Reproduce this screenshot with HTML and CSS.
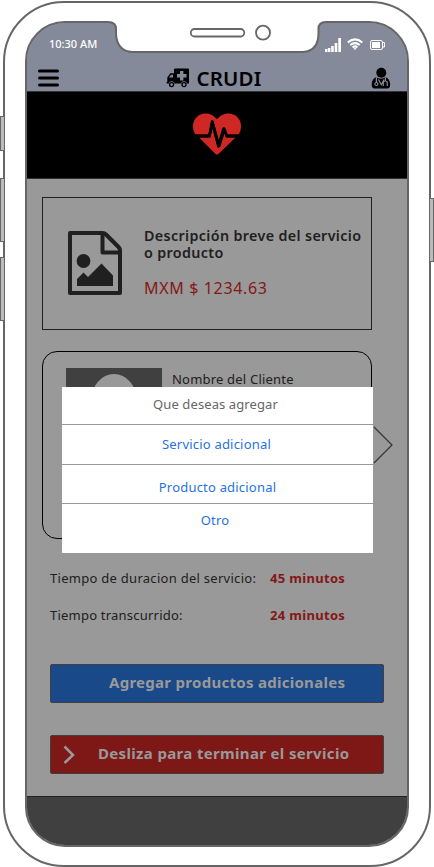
FILE: index.html
```
<!DOCTYPE html>
<html lang="es">
<head>
<meta charset="utf-8">
<title>CRUDI</title>
<link rel="stylesheet" href="styles.css">
</head>
<body>
<div class="phone">
  <i class="side mute"></i><i class="side vol-up"></i><i class="side vol-down"></i><i class="side power"></i>
  <div class="screen">
    <header class="top">
      <div class="status">
        <span class="clock">10:30 AM</span>
        <svg class="status-icons" width="62" height="16" viewBox="0 0 62 16" fill="#fff">
          <path d="M0 12h2.400v3H0zM2.900 11h2.500v4H2.900zM6.200 9h2.500v6H6.200zM9.700 6h2.600v9H9.700zM13.300 1H16v14h-2.700z"/>
          <g fill="none" stroke="#fff" stroke-width="2"><path d="M22.700 5.500Q30-.7 37.300 5.500M25.300 8.100Q30 4.200 34.700 8.100M27.600 10.400Q30 8.300 32.400 10.400"/></g>
          <path d="M28.500 11.500Q30 10.500 31.500 11.500L30 13z"/>
          <rect x="45.500" y="3.500" width="12" height="9" rx="1.500" fill="none" stroke="#fff"/><path d="M47 5h8v6h-8z"/><path d="M58 5.500h1.500v4.500H58" fill="none" stroke="#fff"/>
        </svg>
      </div>
      <div class="nav">
        <svg class="menu" width="21" height="18" viewBox="0 0 21 18"><path d="M1.500 2h18M1.500 9h18M1.500 16h18" stroke="#000" stroke-width="3" stroke-linecap="round"/></svg>
        <div class="brand">
          <svg width="24" height="20" viewBox="0 0 24 20">
            <path d="M8 1.500q0-1 1-1h13q1 0 1 1v14h-2.100a3 3 0 0 0-5.800 0H8.500a3 3 0 0 0-5.800 0H.600V14h.700V9.500l3-4.300H8z"/>
            <path d="M3 9.500 5 6.800h2v2.700zM14 3h3.400v3H20.500v3.400h-3.100v3H14v-3h-3V6h3z" fill="#848a99"/>
            <circle cx="5.600" cy="16.600" r="2.700"/><circle cx="18" cy="16.600" r="2.700"/><circle cx="5.600" cy="16.600" r="1.300" fill="#848a99"/><circle cx="18" cy="16.600" r="1.300" fill="#848a99"/>
          </svg>
          <h1>CRUDI</h1>
        </div>
        <svg class="doctor" width="20" height="22" viewBox="0 0 20 22">
          <circle cx="10.300" cy="5.800" r="5"/>
          <path d="M5 10.300Q1 11.500.7 17.500.5 21.400 3.500 21.400h12.800q3 0 2.800-3.900-.3-6-4.400-7.200-4.500 2.800-9.700 0z"/>
          <g fill="none" stroke="#848a99" stroke-width="1.200"><path d="M5.400 10.500v5M14.400 10.500v3.500M12.300 19v-3q0-2 2-2t2 2v3M7.500 12.500l2.800 5.200 2.700-5.200"/><circle cx="5.400" cy="17" r="1.500"/></g>
        </svg>
      </div>
    </header>
    <section class="banner">
      <svg width="48" height="42" viewBox="0 0 48 42">
        <path fill="#cf2824" d="M24 6.200C20 1.800 16.500.5 12.500.5 5.500.5 0 6 0 13c0 3.200.8 6 2.300 8.500h13l3.400-13.500h1.800l5.300 19 3.500-11.800h2.800l2.300 6.300h11.300C47.300 19 48 16.200 48 13 48 6 42.500.5 35.500.5c-4 0-7.500 1.300-11.500 5.700z"/>
        <path fill="#cf2824" d="M6 24.500h11.300l2.300-8.700 4.900 18.200h2.700l4.500-14 1.500 4.500H42.500L26 40.600q-2 2-4 0z"/>
        <path fill="none" stroke="#000" stroke-width="2.800" stroke-linejoin="round" d="M0 23h16.400L19.200 8.500l6.300 25 5.500-18 2.700 7.500H48"/>
      </svg>
    </section>
    <main>
      <article class="product">
        <svg class="doc" width="56" height="66" viewBox="0 0 56 66">
          <path fill="none" stroke="#202020" stroke-width="4" stroke-linejoin="round" d="M3 3h32.500q2 0 3.500 1.500L51.500 17q1.500 1.500 1.500 3.500v42.500H3zM35.500 3v19.500H53"/>
          <circle cx="16.500" cy="31" r="6.900" fill="#202020"/><path fill="#202020" d="M10 56v-7l6.500-6.500L21 47l13.500-13.500L46 45.500V56z"/>
        </svg>
        <div>
          <h2>Descripción breve del servicio o producto</h2>
          <p class="price">MXM $ 1234.63</p>
        </div>
      </article>
      <article class="client">
        <svg class="avatar" width="96" height="130" viewBox="0 0 96 130"><path fill="#404040" d="M0 0h96v130H0z"/><ellipse cx="48" cy="33" rx="23" ry="27" fill="#999"/></svg>
        <p>Nombre del Cliente</p>
        <svg class="next" width="20" height="38" viewBox="0 0 20 38"><path d="M1 1l18 18L1 37" fill="none" stroke="#333" stroke-width="1.200"/></svg>
      </article>
      <dl>
        <div><dt class="duration">Tiempo de duracion del servicio:</dt><dd>45 minutos</dd></div>
        <div><dt class="elapsed">Tiempo transcurrido:</dt><dd>24 minutos</dd></div>
      </dl>
      <button class="add"><span>Agregar productos adicionales</span></button>
      <button class="finish"><svg width="12" height="20" viewBox="0 0 12 20"><path d="M1.500 1.500 10 10l-8.500 8" fill="none" stroke="#999" stroke-width="2.500"/></svg><span>Desliza para terminar el servicio</span></button>
    </main>
    <footer></footer>
    <div class="dialog">
      <p class="question">Que deseas agregar</p>
      <a class="service">Servicio adicional</a>
      <a class="item">Producto adicional</a>
      <a class="other">Otro</a>
    </div>
  </div>
  <svg class="notch" width="220" height="34" viewBox="106 20 220 34">
    <path d="M106 20v2h2q8 0 8 8v3.500Q117 50 132 52h171q15-1 15.500-19V30q0-8 7.500-8v-2z" fill="#fff"/>
    <path d="M106 22h2q8 0 8 7v5q1 17 16 18h171q15-1 15.500-18V29q0-7 7.500-7" fill="none" stroke="#666" stroke-width="2"/>
    <rect x="190.800" y="29" width="53.500" height="7.500" rx="3.750" fill="none" stroke="#666" stroke-width="1.800"/><circle cx="263" cy="32.700" r="7" fill="none" stroke="#666" stroke-width="1.800"/>
  </svg>
</div>
</body>
</html>
```
FILE: styles.css
```
* { box-sizing: border-box; }
body { margin: 0; height: 867px; overflow: hidden; background: #fff; font: 13px "Noto Sans", sans-serif; color: #202020; }
h1, h2, p, dl, dd { margin: 0; }
svg { display: block; flex: none; }
span, p, dt, dd, h1 { white-space: nowrap; }

.phone { position: relative; width: 428px; height: 866px; margin: 1px 0 0 3px; padding: 18px 20px; border: 2px solid #666; border-radius: 61px; background: #fff; }
.screen { position: relative; display: flex; flex-direction: column; width: 384px; height: 826px; border: 2px solid #666; border-radius: 40px; background: #999; overflow: hidden; }
.notch { position: absolute; left: 101px; top: 17px; }
.side { position: absolute; width: 5px; left: -5px; border: 1px solid #666; background: #bbb; }
.mute { top: 113px; height: 35px; }
.vol-up { top: 175px; height: 64px; }
.vol-down { top: 254px; height: 64px; }
.power { left: auto; right: -5px; top: 195px; height: 64px; }

.top { height: 69px; background: #848a99; border-bottom: 1px solid #30333a; }
.status { display: flex; justify-content: space-between; height: 40px; padding: 14px 20px 0 22px; color: #fff; }
.clock { font-size: 11px; line-height: 14px; font-weight: 500; }
.nav { display: flex; justify-content: space-between; align-items: center; height: 28px; padding: 2px 16px 0 11px; }
.brand { display: flex; align-items: center; gap: 6px; }
.brand h1 { font-size: 20.5px; line-height: 24px; font-weight: 600; letter-spacing: .2px; color: #000; margin-right: 2px; }
.banner { display: flex; justify-content: center; height: 87px; padding-top: 21px; background: #000; border-bottom: 1px solid #303030; }

main { height: 617px; padding: 18px 23px 0 15px; }
.product { display: flex; width: 330px; height: 133px; padding: 32px 0 0 24px; border: 1px solid #202020; }
.product > div { width: 246px; padding: 0 0 0 21px; }
h2 { font-size: 14.3px; line-height: 17px; font-weight: 600; letter-spacing: .36px; margin-top: -3px; }
.price { margin-top: 15px; font-size: 16px; line-height: 24px; letter-spacing: .65px; color: #841717; }
.client { position: relative; display: flex; gap: 10px; width: 330px; height: 188px; margin-top: 21px; padding: 16px 23px; border: 1px solid #000; border-radius: 15px; }
.client p { line-height: 22px; letter-spacing: .2px; }
.next { position: absolute; left: 330px; top: 74px; }
dl { margin: 28px 0 0 8px; }
dl div { display: flex; height: 37px; line-height: 22px; }
dt { width: 220px; letter-spacing: .28px; }
.elapsed { letter-spacing: .22px; }
dd { color: #841717; font-weight: 700; letter-spacing: .32px; }
button { display: flex; align-items: center; width: 334px; height: 39px; margin: 0 0 32px 8px; padding: 0; border: 1px solid #404040; border-radius: 2px; color: #999; font: 700 15px "Noto Sans", sans-serif; }
button span { padding-bottom: 3px; }
.add { margin-top: 23px; padding-left: 58px; background: #194989; letter-spacing: .28px; }
.finish { gap: 23px; padding-left: 12px; background: #7d1816; letter-spacing: .34px; }
footer { flex: 1; background: #404040; border-top: 1px solid #202020; }

.dialog { position: absolute; left: 35px; top: 364px; width: 311px; height: 166px; background: #fff; text-align: center; color: #2672e0; letter-spacing: .2px; }
.dialog > * { display: block; border-bottom: 1px solid #999; }
.question { height: 38px; line-height: 35px; color: #666; padding-right: 4px; letter-spacing: .1px; }
.service { height: 40px; line-height: 38px; padding-right: 2px; }
.item { height: 39px; line-height: 44px; }
.dialog .other { height: 49px; line-height: 33px; padding-right: 5px; border: 0; }
```
